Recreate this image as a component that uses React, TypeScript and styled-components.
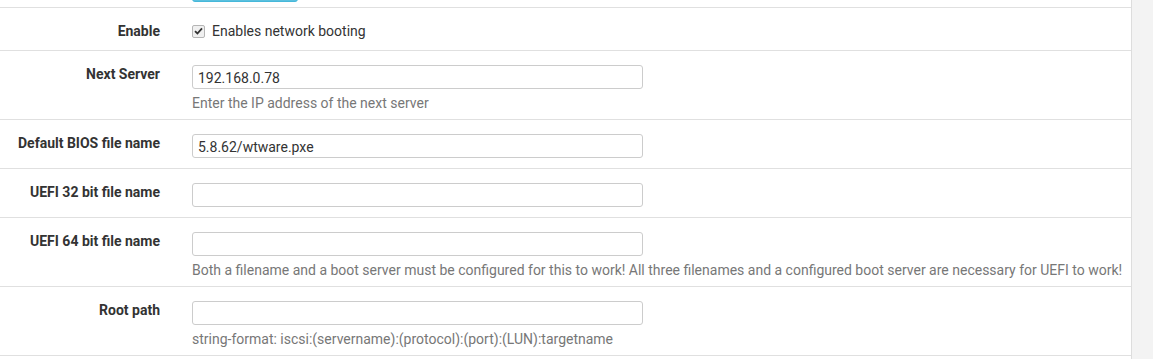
import React from 'react';
import styled, { createGlobalStyle } from 'styled-components';

const Global = createGlobalStyle`
  html, body {
    margin: 0;
    padding: 0;
    background: #ffffff;
  }
  body {
    font-family: Roboto, "Liberation Sans", sans-serif;
    color: #333333;
  }
`;

const Page = styled.div`
  display: flex;
  width: 1153px;
  height: 359px;
  overflow: hidden;
`;

const Panel = styled.div`
  width: 1131px;
  background: #ffffff;
  border-right: 1px solid #dddddd;
`;

const Side = styled.div`
  flex: 1;
  background: #f3f3f3;
`;

const TopStrip = styled.div`
  height: 7px;
  padding-left: 192px;
  display: flex;
  align-items: flex-end;
  overflow: hidden;
  box-sizing: border-box;
  padding-bottom: 5px;
`;

const CutButton = styled.div`
  width: 106px;
  height: 30px;
  flex-shrink: 0;
  background: #5bc0de;
  border: 1px solid #46b8da;
  border-radius: 3px;
  box-sizing: border-box;
`;

const Row = styled.div`
  display: grid;
  grid-template-columns: 160px 1fr;
  column-gap: 32px;
  border-top: 1px solid #e0e0e0;
  padding: 14px 0 10px;
`;

const Label = styled.div`
  text-align: right;
  font-weight: 700;
  font-size: 14px;
  line-height: 18px;
  color: #333333;
`;

const Field = styled.div`
  display: flex;
  flex-direction: column;
`;

const Input = styled.input`
  width: 451px;
  height: 24px;
  box-sizing: border-box;
  border: 1px solid #cccccc;
  border-radius: 3px;
  padding: 1px 5px 0;
  font-family: Roboto, "Liberation Sans", sans-serif;
  font-size: 14px;
  color: #333333;
  background: #ffffff;
  outline: none;
`;

const Help = styled.div`
  margin-top: 6px;
  margin-bottom: -2px;
  font-size: 14px;
  line-height: 16px;
  color: #777777;
`;

const CheckLine = styled.label`
  display: flex;
  align-items: center;
  height: 18px;
  font-size: 14px;
  color: #333333;
`;

const Box = styled.span`
  width: 13px;
  height: 13px;
  box-sizing: border-box;
  border: 1px solid #b5b5b5;
  border-radius: 2px;
  background: #f0f0f0;
  display: inline-flex;
  align-items: center;
  justify-content: center;
  margin-right: 7px;
`;

const rows = [
  { label: 'Next Server', value: '192.168.0.78', help: 'Enter the IP address of the next server' },
  { label: 'Default BIOS file name', value: '5.8.62/wtware.pxe' },
  { label: 'UEFI 32 bit file name', value: '' },
  {
    label: 'UEFI 64 bit file name',
    value: '',
    help: 'Both a filename and a boot server must be configured for this to work! All three filenames and a configured boot server are necessary for UEFI to work!',
  },
  { label: 'Root path', value: '', help: 'string-format: iscsi:(servername):(protocol):(port):(LUN):targetname' },
];

export default function App() {
  return (
    <Page>
      <Global />
      <Panel>
        <TopStrip>
          <CutButton />
        </TopStrip>
        <Row>
          <Label>Enable</Label>
          <Field>
            <CheckLine>
              <Box>
                <svg width="9" height="8" viewBox="0 0 9 8">
                  <path d="M1 4.2 L3.4 6.5 L8 1.3" stroke="#333" strokeWidth="1.8" fill="none" />
                </svg>
              </Box>
              Enables network booting
            </CheckLine>
          </Field>
        </Row>
        {rows.map((r) => (
          <Row key={r.label}>
            <Label>{r.label}</Label>
            <Field>
              <Input defaultValue={r.value} />
              {r.help && <Help>{r.help}</Help>}
            </Field>
          </Row>
        ))}
        <Row />
      </Panel>
      <Side />
    </Page>
  );
}
